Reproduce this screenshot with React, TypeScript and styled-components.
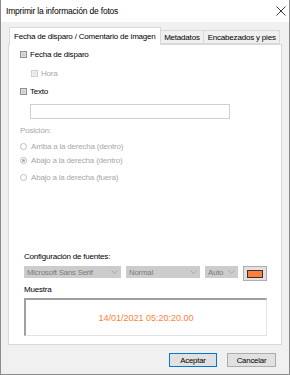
import React, { FC } from 'react';
import styled, { createGlobalStyle } from 'styled-components';

const GlobalStyle = createGlobalStyle`
    html, body {
        margin: 0;
        padding: 0;
        background: #f0f0f0;
    }
    * {
        box-sizing: border-box;
    }
`

const Window = styled.div`
    width: 290px;
    height: 375px;
    background: #f0f0f0;
    border: 1px solid #8c8c8c;
    border-top: none;
    display: flex;
    flex-direction: column;
    font-family: "Liberation Sans", Arial, sans-serif;
    font-size: 8px;
    letter-spacing: -0.2px;
    color: #000;
`

const TitleBar = styled.div`
    height: 22px;
    background: #fff;
    display: flex;
    align-items: center;
    justify-content: space-between;
    padding: 0 3px 0 5px;
    font-size: 8.5px;
`

const Body = styled.div`
    padding: 5px 7px 0 7px;
    display: flex;
    flex-direction: column;
`

const TabStrip = styled.div`
    display: flex;
    align-items: flex-end;
    height: 17px;
    padding-left: 1px;
    position: relative;
    z-index: 1;
`

const Tab = styled.div<{ active?: boolean }>`
    height: ${({ active }) => (active ? '18px' : '14px')};
    margin-bottom: ${({ active }) => (active ? '-1px' : '0')};
    padding: 0 ${({ active }) => (active ? '4px' : '3.5px')};
    display: flex;
    align-items: center;
    background: ${({ active }) => (active ? '#fff' : '#f0f0f0')};
    border: 1px solid #d9d9d9;
    border-bottom: ${({ active }) => (active ? 'none' : '1px solid #d9d9d9')};
    margin-left: ${({ active }) => (active ? '0' : '-1px')};
    white-space: nowrap;
    font-size: 8px;
`

const Panel = styled.div`
    height: 301px;
    background: #fff;
    border: 1px solid #d9d9d9;
    padding: 3px 0 0 11px;
    display: flex;
    flex-direction: column;
`

const CheckRow = styled.label<{ indent?: boolean; disabled?: boolean; gap?: number }>`
    display: flex;
    align-items: center;
    gap: 3px;
    height: 12px;
    margin-top: ${({ gap }) => gap ?? 0}px;
    margin-left: ${({ indent }) => (indent ? '11px' : '0')};
    color: ${({ disabled }) => (disabled ? '#a8a8a8' : '#000')};
`

const Box = styled.span<{ disabled?: boolean }>`
    width: 7px;
    height: 7px;
    border: 1px solid ${({ disabled }) => (disabled ? '#cfcfcf' : '#8f8f8f')};
    background: ${({ disabled }) => (disabled ? '#e8e8e8' : '#cdcdcd')};
    box-shadow: inset 0 0 0 1px ${({ disabled }) => (disabled ? '#f0f0f0' : '#dedede')};
`

const TextInput = styled.div`
    margin: 7px 0 0 10px;
    width: 200px;
    height: 15px;
    border: 1px solid #d0d0d0;
    background: #fff;
`

const Muted = styled.div`
    color: #a8a8a8;
    margin-top: 7px;
    height: 10px;
    line-height: 10px;
`

const RadioList = styled.div`
    display: flex;
    flex-direction: column;
    margin-top: 4px;
`

const RadioRow = styled.div<{ gap: number }>`
    display: flex;
    align-items: center;
    gap: 4px;
    height: 12px;
    margin-top: ${({ gap }) => gap}px;
    color: #a8a8a8;
`

const Radio = styled.span<{ checked?: boolean }>`
    width: 7px;
    height: 7px;
    border-radius: 50%;
    border: 1px solid #bdbdbd;
    background: #fff;
    display: flex;
    align-items: center;
    justify-content: center;
    &::after {
        content: '';
        width: 3px;
        height: 3px;
        border-radius: 50%;
        background: ${({ checked }) => (checked ? '#a8a8a8' : 'transparent')};
    }
`

const FontSection = styled.div`
    margin-top: auto;
    padding: 0 0 8px 4px;
    display: flex;
    flex-direction: column;
`

const SectionLabel = styled.div`
    height: 10px;
    line-height: 10px;
`

const SelectRow = styled.div`
    display: flex;
    align-items: flex-start;
    gap: 5px;
    margin-top: 4px;
`

const Select = styled.div<{ w: number }>`
    width: ${({ w }) => w}px;
    height: 12px;
    background: #cccccc;
    color: #7a7a7a;
    display: flex;
    align-items: center;
    justify-content: space-between;
    padding: 0 3px 0 3px;
    font-size: 7.8px;
    white-space: nowrap;
`

const ColorButton = styled.div`
    width: 24px;
    height: 15px;
    background: #e1e1e1;
    border: 1px solid #adadad;
    display: flex;
    align-items: center;
    justify-content: center;
`

const Swatch = styled.span`
    width: 16px;
    height: 8px;
    background: #ff7f3a;
    border: 1px solid #333;
`

const SampleLabel = styled(SectionLabel)`
    margin-top: 4px;
`

const SampleBox = styled.div`
    margin-top: 3px;
    width: 243px;
    height: 38px;
    border-top: 2px solid #a0a0a0;
    border-left: 2px solid #a0a0a0;
    border-right: 1px solid #e3e3e3;
    border-bottom: 1px solid #e3e3e3;
    display: flex;
    align-items: center;
    justify-content: center;
    color: #ff7f3a;
    font-size: 9px;
    letter-spacing: 0;
`

const Footer = styled.div`
    display: flex;
    justify-content: flex-end;
    gap: 10px;
    padding: 8px 6px 0 0;
`

const Button = styled.div<{ primary?: boolean }>`
    width: ${({ primary }) => (primary ? '48px' : '49px')};
    height: 14px;
    background: #e1e1e1;
    border: 1px solid ${({ primary }) => (primary ? '#0078d7' : '#adadad')};
    display: flex;
    align-items: center;
    justify-content: center;
    font-size: 7.8px;
`

const Chevron: FC = () => (
    <svg width="7" height="4" viewBox="0 0 7 4">
        <path d="M0.5 0.5 L3.5 3.5 L6.5 0.5" fill="none" stroke="#a0a0a0" strokeWidth="0.8" />
    </svg>
);

const CloseIcon: FC = () => (
    <svg width="10" height="10" viewBox="0 0 10 10">
        <path d="M0.5 0.5 L9.5 9.5 M9.5 0.5 L0.5 9.5" stroke="#222" strokeWidth="0.9" />
    </svg>
);

const App: FC = () => {
    return (
        <>
            <GlobalStyle />
            <Window>
                <TitleBar>
                    <span>Imprimir la información de fotos</span>
                    <CloseIcon />
                </TitleBar>
                <Body>
                    <TabStrip>
                        <Tab active>Fecha de disparo / Comentario de imagen</Tab>
                        <Tab>Metadatos</Tab>
                        <Tab>Encabezados y pies</Tab>
                    </TabStrip>
                    <Panel>
                        <CheckRow>
                            <Box />
                            Fecha de disparo
                        </CheckRow>
                        <CheckRow indent disabled gap={7}>
                            <Box disabled />
                            Hora
                        </CheckRow>
                        <CheckRow gap={6}>
                            <Box />
                            Texto
                        </CheckRow>
                        <TextInput />
                        <Muted>Posición:</Muted>
                        <RadioList>
                            <RadioRow gap={0}>
                                <Radio />
                                Arriba a la derecha (dentro)
                            </RadioRow>
                            <RadioRow gap={2}>
                                <Radio checked />
                                Abajo a la derecha (dentro)
                            </RadioRow>
                            <RadioRow gap={5}>
                                <Radio />
                                Abajo a la derecha (fuera)
                            </RadioRow>
                        </RadioList>
                        <FontSection>
                            <SectionLabel>Configuración de fuentes:</SectionLabel>
                            <SelectRow>
                                <Select w={97}>Microsoft Sans Serif<Chevron /></Select>
                                <Select w={74}>Normal<Chevron /></Select>
                                <Select w={33}>Auto<Chevron /></Select>
                                <ColorButton><Swatch /></ColorButton>
                            </SelectRow>
                            <SampleLabel>Muestra</SampleLabel>
                            <SampleBox>14/01/2021 05:20:20.00</SampleBox>
                        </FontSection>
                    </Panel>
                    <Footer>
                        <Button primary>Aceptar</Button>
                        <Button>Cancelar</Button>
                    </Footer>
                </Body>
            </Window>
        </>
    );
};

export default App;
